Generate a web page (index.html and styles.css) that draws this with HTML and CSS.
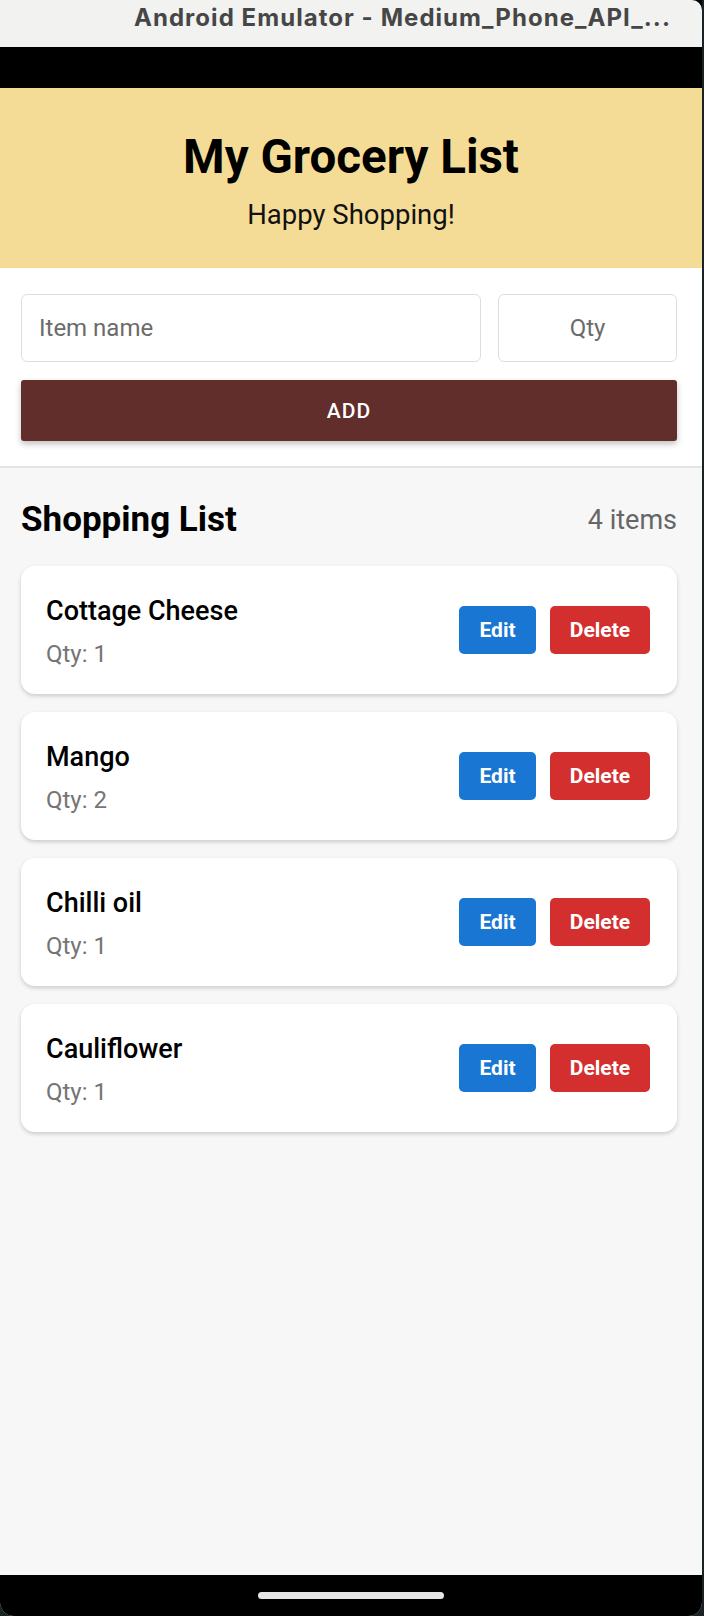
FILE: index.html
```html
<!DOCTYPE html>
<html lang="en">
<head>
<meta charset="utf-8">
<title>My Grocery List</title>
<link rel="stylesheet" href="styles.css">
</head>
<body>
<div class="window">
  <div class="titlebar"><span class="title-text">Android Emulator - Medium_Phone_API_...</span></div>
  <div class="statusbar"></div>
  <div class="screen">
    <header class="app-header">
      <h1 class="app-title">My Grocery List</h1>
      <p class="app-subtitle">Happy Shopping!</p>
    </header>
    <section class="form">
      <div class="input-row">
        <div class="field field-name"><span class="placeholder">Item name</span></div>
        <div class="field field-qty"><span class="placeholder">Qty</span></div>
      </div>
      <button class="add-btn">ADD</button>
    </section>
    <main class="list-area">
      <div class="list-head">
        <h2 class="list-title">Shopping List</h2>
        <span class="list-count">4 items</span>
      </div>
      <div class="cards">
        <div class="card">
          <div class="card-info"><div class="item-name">Cottage Cheese</div><div class="item-qty">Qty: 1</div></div>
          <div class="card-actions"><button class="btn btn-edit">Edit</button><button class="btn btn-delete">Delete</button></div>
        </div>
        <div class="card">
          <div class="card-info"><div class="item-name">Mango</div><div class="item-qty">Qty: 2</div></div>
          <div class="card-actions"><button class="btn btn-edit">Edit</button><button class="btn btn-delete">Delete</button></div>
        </div>
        <div class="card">
          <div class="card-info"><div class="item-name">Chilli oil</div><div class="item-qty">Qty: 1</div></div>
          <div class="card-actions"><button class="btn btn-edit">Edit</button><button class="btn btn-delete">Delete</button></div>
        </div>
        <div class="card">
          <div class="card-info"><div class="item-name">Cauliflower</div><div class="item-qty">Qty: 1</div></div>
          <div class="card-actions"><button class="btn btn-edit">Edit</button><button class="btn btn-delete">Delete</button></div>
        </div>
      </div>
    </main>
    <div class="navbar"><div class="home-pill"></div></div>
  </div>
</div>
</body>
</html>
```

FILE: styles.css
```css
html, body {
  margin: 0;
  padding: 0;
}
body {
  background: #1b2226;
  width: 704px;
  height: 1616px;
  overflow: hidden;
  font-family: Roboto, "Liberation Sans", sans-serif;
}
.window {
  width: 702px;
  height: 1616px;
  display: flex;
  flex-direction: column;
  border-radius: 0 0 14px 14px;
  overflow: hidden;
  background: #000;
}
.titlebar {
  height: 47px;
  flex: none;
  box-sizing: border-box;
  background: #f2f2f1;
  display: flex;
  align-items: flex-start;
  justify-content: flex-end;
  padding: 3px 31px 0 0;
  border-top-right-radius: 10px;
}
.title-text {
  font-family: Inter, "Open Sans", sans-serif;
  font-weight: 700;
  font-size: 24px;
  line-height: 30px;
  color: #464646;
  white-space: nowrap;
  letter-spacing: 1.05px;
}
.statusbar {
  height: 41px;
  flex: none;
  background: #000;
}
.screen {
  flex: 1;
  display: flex;
  flex-direction: column;
  background: #f7f7f7;
}
.app-header {
  background: #f5dc96;
  height: 180px;
  box-sizing: border-box;
  padding-top: 41px;
  text-align: center;
}
.app-title {
  margin: 0;
  font-size: 47.5px;
  line-height: 56px;
  font-weight: 700;
  color: #000;
}
.app-subtitle {
  margin: 14px 0 0;
  font-size: 27.5px;
  line-height: 32px;
  font-weight: 400;
  color: #111;
}
.form {
  background: #fff;
  padding: 26px 25px 25px 21px;
  border-bottom: 2px solid #e4e4e4;
}
.input-row {
  display: flex;
  gap: 17px;
}
.field {
  height: 68px;
  box-sizing: border-box;
  border: 1.5px solid #dedede;
  border-radius: 6px;
  display: flex;
  align-items: center;
  background: #fff;
}
.field-name {
  flex: 1;
  padding-left: 17px;
}
.field-qty {
  width: 179px;
  justify-content: center;
}
.placeholder {
  font-size: 24px;
  color: #6b6b6b;
}
.add-btn {
  display: block;
  width: 100%;
  margin-top: 18px;
  height: 61px;
  border: none;
  border-radius: 3px;
  background: #612e2b;
  color: #fff;
  font-family: Roboto, sans-serif;
  font-weight: 500;
  font-size: 21px;
  letter-spacing: 0.05em;
  box-shadow: 0 3px 6px rgba(0,0,0,0.25);
}
.list-area {
  flex: 1;
  padding: 0 25px 0 21px;
}
.list-head {
  display: flex;
  justify-content: space-between;
  align-items: center;
  padding-top: 34px;
  height: 70px;
  box-sizing: border-box;
}
.list-title {
  margin: 0;
  font-size: 35px;
  line-height: 40px;
  font-weight: 700;
  color: #000;
}
.list-count {
  font-size: 27px;
  line-height: 40px;
  color: #666;
}
.cards {
  display: flex;
  flex-direction: column;
  gap: 18px;
  padding-top: 28px;
}
.card {
  background: #fff;
  border-radius: 14px;
  height: 128px;
  box-sizing: border-box;
  padding: 0 27px 0 25px;
  display: flex;
  align-items: center;
  justify-content: space-between;
  box-shadow: 0 2px 4px rgba(0,0,0,0.18);
}
.card-info {
  display: flex;
  flex-direction: column;
  gap: 15px;
  margin-top: 2px;
}
.item-name {
  font-size: 27px;
  line-height: 30px;
  font-weight: 500;
  color: #000;
}
.item-qty {
  font-size: 24px;
  line-height: 26px;
  color: #757575;
}
.card-actions {
  display: flex;
  gap: 14px;
}
.btn {
  height: 48px;
  border: none;
  border-radius: 5px;
  color: #fff;
  font-family: Roboto, sans-serif;
  font-weight: 700;
  font-size: 21px;
  padding: 0;
}
.btn-edit {
  width: 77px;
  background: #1976d2;
}
.btn-delete {
  width: 100px;
  background: #d32f2f;
}
.navbar {
  height: 41px;
  flex: none;
  background: #000;
  display: flex;
  justify-content: center;
  padding-top: 17px;
  box-sizing: border-box;
}
.home-pill {
  width: 186px;
  height: 7px;
  border-radius: 4px;
  background: #e6e6e6;
}
```
